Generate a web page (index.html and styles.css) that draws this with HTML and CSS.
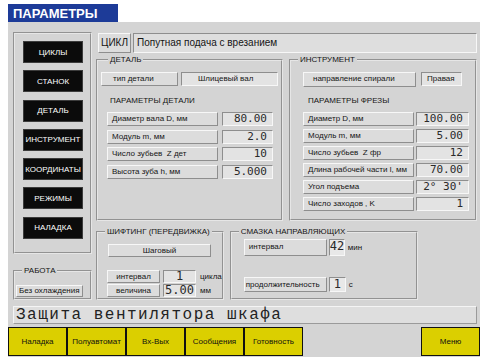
FILE: index.html
```html
<!DOCTYPE html>
<html lang="ru">

<head>
    <meta charset="UTF-8">
    <meta name="viewport" content="width=device-width, initial-scale=1.0">
    <title>Параметры</title>
    <link rel="stylesheet" href="styles.css">
</head>

<body>
    <div class="screen">
        <div class="title-box">ПАРАМЕТРЫ</div>

        <div class="panel">
            <div class="content">
                <div class="top">
                    <div class="side">
                        <div class="menu">
                            <button class="menu-button">ЦИКЛЫ</button>
                            <button class="menu-button">СТАНОК</button>
                            <button class="menu-button">ДЕТАЛЬ</button>
                            <button class="menu-button">ИНСТРУМЕНТ</button>
                            <button class="menu-button">КООРДИНАТЫ</button>
                            <button class="menu-button">РЕЖИМЫ</button>
                            <button class="menu-button">НАЛАДКА</button>
                        </div>
                        <fieldset class="group work-group">
                            <legend>РАБОТА</legend>
                            <div class="label mode">Без охлаждения</div>
                        </fieldset>
                    </div>

                    <div class="main">
                        <div class="cycle">
                            <div class="label cycle-label">ЦИКЛ</div>
                            <div class="field cycle-value">Попутная подача с врезанием</div>
                        </div>

                        <div class="groups groups-big">
                            <fieldset class="group part-group">
                                <legend>ДЕТАЛЬ</legend>
                                <div class="pair">
                                    <div class="label part-type">тип детали</div>
                                    <div class="field part-kind">Шлицевый вал</div>
                                </div>
                                <div class="subtitle">ПАРАМЕТРЫ ДЕТАЛИ</div>
                                <div class="rows rows-part">
                                    <div class="row">
                                        <div class="label">Диаметр вала D, мм</div>
                                        <div class="field value">80.00</div>
                                    </div>
                                    <div class="row">
                                        <div class="label">Модуль m, мм</div>
                                        <div class="field value">2.0</div>
                                    </div>
                                    <div class="row">
                                        <div class="label">Число зубьев &nbsp;Z дет</div>
                                        <div class="field value">10</div>
                                    </div>
                                    <div class="row">
                                        <div class="label">Высота зуба h, мм</div>
                                        <div class="field value">5.000</div>
                                    </div>
                                </div>
                            </fieldset>

                            <fieldset class="group tool-group">
                                <legend>ИНСТРУМЕНТ</legend>
                                <div class="pair">
                                    <div class="label spiral">направление спирали</div>
                                    <div class="field spiral-value">Правая</div>
                                </div>
                                <div class="subtitle">ПАРАМЕТРЫ ФРЕЗЫ</div>
                                <div class="rows rows-tool">
                                    <div class="row">
                                        <div class="label">Диаметр D, мм</div>
                                        <div class="field value">100.00</div>
                                    </div>
                                    <div class="row">
                                        <div class="label">Модуль m, мм</div>
                                        <div class="field value">5.00</div>
                                    </div>
                                    <div class="row">
                                        <div class="label">Число зубьев &nbsp;Z фр</div>
                                        <div class="field value">12</div>
                                    </div>
                                    <div class="row">
                                        <div class="label">Длина рабочей части l, мм</div>
                                        <div class="field value">70.00</div>
                                    </div>
                                    <div class="row">
                                        <div class="label">Угол подъема</div>
                                        <div class="field value">2° 30'</div>
                                    </div>
                                    <div class="row">
                                        <div class="label">Число заходов , K</div>
                                        <div class="field value">1</div>
                                    </div>
                                </div>
                            </fieldset>
                        </div>

                        <div class="groups groups-small">
                            <fieldset class="group shift-group">
                                <legend>ШИФТИНГ (ПЕРЕДВИЖКА)</legend>
                                <div class="label step">Шаговый</div>
                                <div class="shift-rows">
                                    <div class="unit-row">
                                        <div class="label shift-label">интервал</div>
                                        <div class="field shift-value">1</div>
                                        <span class="unit">цикла</span>
                                    </div>
                                    <div class="unit-row">
                                        <div class="label shift-label">величина</div>
                                        <div class="field shift-value">5.00</div>
                                        <span class="unit">мм</span>
                                    </div>
                                </div>
                            </fieldset>

                            <fieldset class="group lube-group">
                                <legend>СМАЗКА НАПРАВЛЯЮЩИХ</legend>
                                <div class="unit-row lube-interval">
                                    <div class="label lube-label">интервал</div>
                                    <div class="field lube-value">42</div>
                                    <span class="unit">мин</span>
                                </div>
                                <div class="unit-row lube-duration">
                                    <div class="label lube-label">продолжительность</div>
                                    <div class="field lube-value">1</div>
                                    <span class="unit">с</span>
                                </div>
                            </fieldset>
                        </div>
                    </div>
                </div>

                <div class="alert">Защита вентилятора шкафа</div>
            </div>

            <div class="footer">
                <button class="soft-key">Наладка</button>
                <button class="soft-key">Полуавтомат</button>
                <button class="soft-key">Вх-Вых</button>
                <button class="soft-key">Сообщения</button>
                <button class="soft-key">Готовность</button>
                <button class="soft-key menu-key">Меню</button>
            </div>
        </div>
    </div>
</body>

</html>
```

FILE: styles.css
```css
body {
    margin: 0;
    background-color: #fff;
    font-family: 'Liberation Sans', Arial, sans-serif;
    color: #151515;
}

.screen {
    width: 472px;
    margin-left: 8px;
    padding-top: 4px;
}

.title-box {
    width: 105px;
    height: 18px;
    padding-left: 5px;
    background-color: #1d3b98;
    color: #fff;
    font-size: 13px;
    font-weight: bold;
    line-height: 19px;
}

.panel {
    background-color: #d4d4d4;
    padding-bottom: 1px;
}

.content {
    padding: 10px 3px 0 5px;
}

.top {
    display: flex;
    gap: 4px;
}

/* left column */
.side {
    width: 79px;
    display: flex;
    flex-direction: column;
    gap: 12px;
}

.menu {
    height: 222px;
    box-sizing: border-box;
    border: 2px groove #e6e6e6;
    padding: 7px 0 0 8px;
    display: flex;
    flex-direction: column;
    gap: 7.3px;
}

.menu-button {
    width: 60px;
    height: 22px;
    padding: 0;
    background-color: #0b0b0b;
    border: 1px solid #3c3c3c;
    color: #fff;
    font-family: inherit;
    font-size: 8px;
}

/* boxes */
.label {
    box-sizing: border-box;
    background-color: #dcdcdc;
    border: 1px solid;
    border-color: #f7f7f7 #8e8e8e #8e8e8e #f7f7f7;
    font-size: 8px;
    line-height: 12px;
    padding-left: 4px;
    white-space: nowrap;
    overflow: hidden;
}

.field {
    box-sizing: border-box;
    background-color: #e3e3e3;
    border: 1px solid;
    border-color: #8e8e8e #f7f7f7 #f7f7f7 #8e8e8e;
    font-size: 8px;
    line-height: 12px;
    white-space: nowrap;
}

.value {
    font-family: 'DejaVu Sans Mono', monospace;
    font-size: 11px;
    text-align: right;
    padding-right: 5px;
    color: #2a2a2a;
}

/* fieldsets */
.group {
    margin: 0;
    min-width: 0;
    box-sizing: border-box;
    border: 2px groove #e6e6e6;
    padding: 7px 0 0 0;
}

.group legend {
    margin-left: 7px;
    padding: 0 2px;
    font-size: 8px;
    line-height: 10px;
}

.work-group {
    height: 34px;
    padding-top: 9px;
    padding-left: 1px;
}

.work-group legend {
    margin-left: 6px;
}

.mode {
    width: 67px;
    height: 12px;
    line-height: 10px;
    padding-left: 2px;
}

/* right column */
.main {
    width: 381px;
    padding-top: 1px;
    display: flex;
    flex-direction: column;
}

.cycle {
    display: flex;
    gap: 2px;
    height: 20px;
    margin-left: 2px;
    margin-bottom: 2px;
}

.cycle-label {
    width: 33px;
    font-size: 10px;
    line-height: 18px;
    padding-left: 0;
    text-align: center;
}

.cycle-value {
    flex: 1;
    font-size: 10px;
    line-height: 18px;
    padding-left: 3px;
    background-color: #dedede;
}

.groups {
    display: flex;
    gap: 6px;
}

.groups-big {
    height: 166px;
    margin-bottom: 6px;
}

.groups-small {
    height: 73px;
}

.groups .group {
    height: 100%;
}

.part-group {
    width: 187px;
}

.part-group legend {
    margin-left: 10px;
}

.tool-group,
.lube-group {
    width: 188px;
}

.pair {
    display: flex;
    height: 14px;
}

.part-group .pair {
    margin-left: 3px;
    gap: 3px;
}

.part-type {
    width: 77px;
    padding-left: 11px;
}

.part-kind {
    width: 97px;
    padding-left: 16px;
}

.tool-group .pair {
    margin-left: 12px;
    gap: 5px;
}

.spiral {
    width: 113px;
    height: 15px;
    padding-left: 9px;
}

.spiral-value {
    width: 41px;
    padding-left: 5px;
}

.subtitle {
    font-size: 8px;
    line-height: 10px;
    margin: 10px 0 6px 12px;
}

.tool-group .subtitle {
    margin-left: 17px;
}

.rows {
    display: flex;
    flex-direction: column;
}

.row {
    display: flex;
    height: 14px;
}

.rows-part {
    margin-left: 9px;
    gap: 3.5px;
}

.rows-part .row {
    gap: 4px;
}

.rows-part .label {
    width: 111px;
}

.rows-part .value {
    width: 51px;
}

.rows-tool {
    margin-left: 12px;
    gap: 3px;
}

.rows-tool .row {
    gap: 2px;
}

.rows-tool .label {
    width: 111px;
}

.rows-tool .value {
    width: 53px;
}

/* shifting */
.step {
    width: 103px;
    height: 13px;
    margin-left: 10px;
    text-align: center;
    padding-left: 0;
    line-height: 11px;
}

.shift-rows {
    margin: 13px 0 0 9px;
    display: flex;
    flex-direction: column;
    gap: 1px;
}

.unit-row {
    display: flex;
    align-items: center;
}

.shift-rows .unit-row {
    height: 13px;
    gap: 3px;
}

.shift-label {
    width: 53px;
    height: 13px;
    text-align: center;
    padding-left: 0;
    line-height: 11px;
}

.shift-value {
    width: 33px;
    height: 13px;
    text-align: center;
    font-family: 'DejaVu Sans Mono', monospace;
    font-size: 12px;
    line-height: 11px;
    color: #2a2a2a;
}

.unit {
    font-size: 8px;
    margin-left: 1px;
}

/* lubrication */
.lube-group {
    padding-top: 2px;
}

.lube-group .unit-row {
    margin-left: 12px;
    gap: 2px;
}

.lube-interval {
    height: 17px;
}

.lube-duration {
    height: 15px;
    margin-top: 21px;
}

.lube-label {
    width: 83px;
    height: 100%;
    line-height: 13px;
}

.lube-value {
    width: 16px;
    height: 100%;
    text-align: center;
    font-family: 'DejaVu Sans Mono', monospace;
    font-size: 12px;
    line-height: 13px;
    background-color: #e8e8e8;
    color: #2a2a2a;
}

.lube-duration .lube-label {
    padding-left: 1px;
}

.lube-duration .lube-value {
    width: 17px;
}

/* message line */
.alert {
    margin-top: 6px;
    height: 18px;
    box-sizing: border-box;
    background-color: #dedede;
    border: 1px solid;
    border-color: #f4f4f4 #9a9a9a #9a9a9a #f4f4f4;
    padding-left: 2px;
    font-family: 'Liberation Mono', monospace;
    font-size: 16px;
    line-height: 16px;
    letter-spacing: 1.5px;
    color: #222;
}

/* soft keys */
.footer {
    display: flex;
    height: 29px;
    margin-top: 3px;
}

.soft-key {
    width: 59px;
    height: 29px;
    padding: 0;
    background-color: #dbcf00;
    border: 1px solid #111;
    color: #111;
    font-family: inherit;
    font-size: 8px;
}

.menu-key {
    margin-left: auto;
}
```
